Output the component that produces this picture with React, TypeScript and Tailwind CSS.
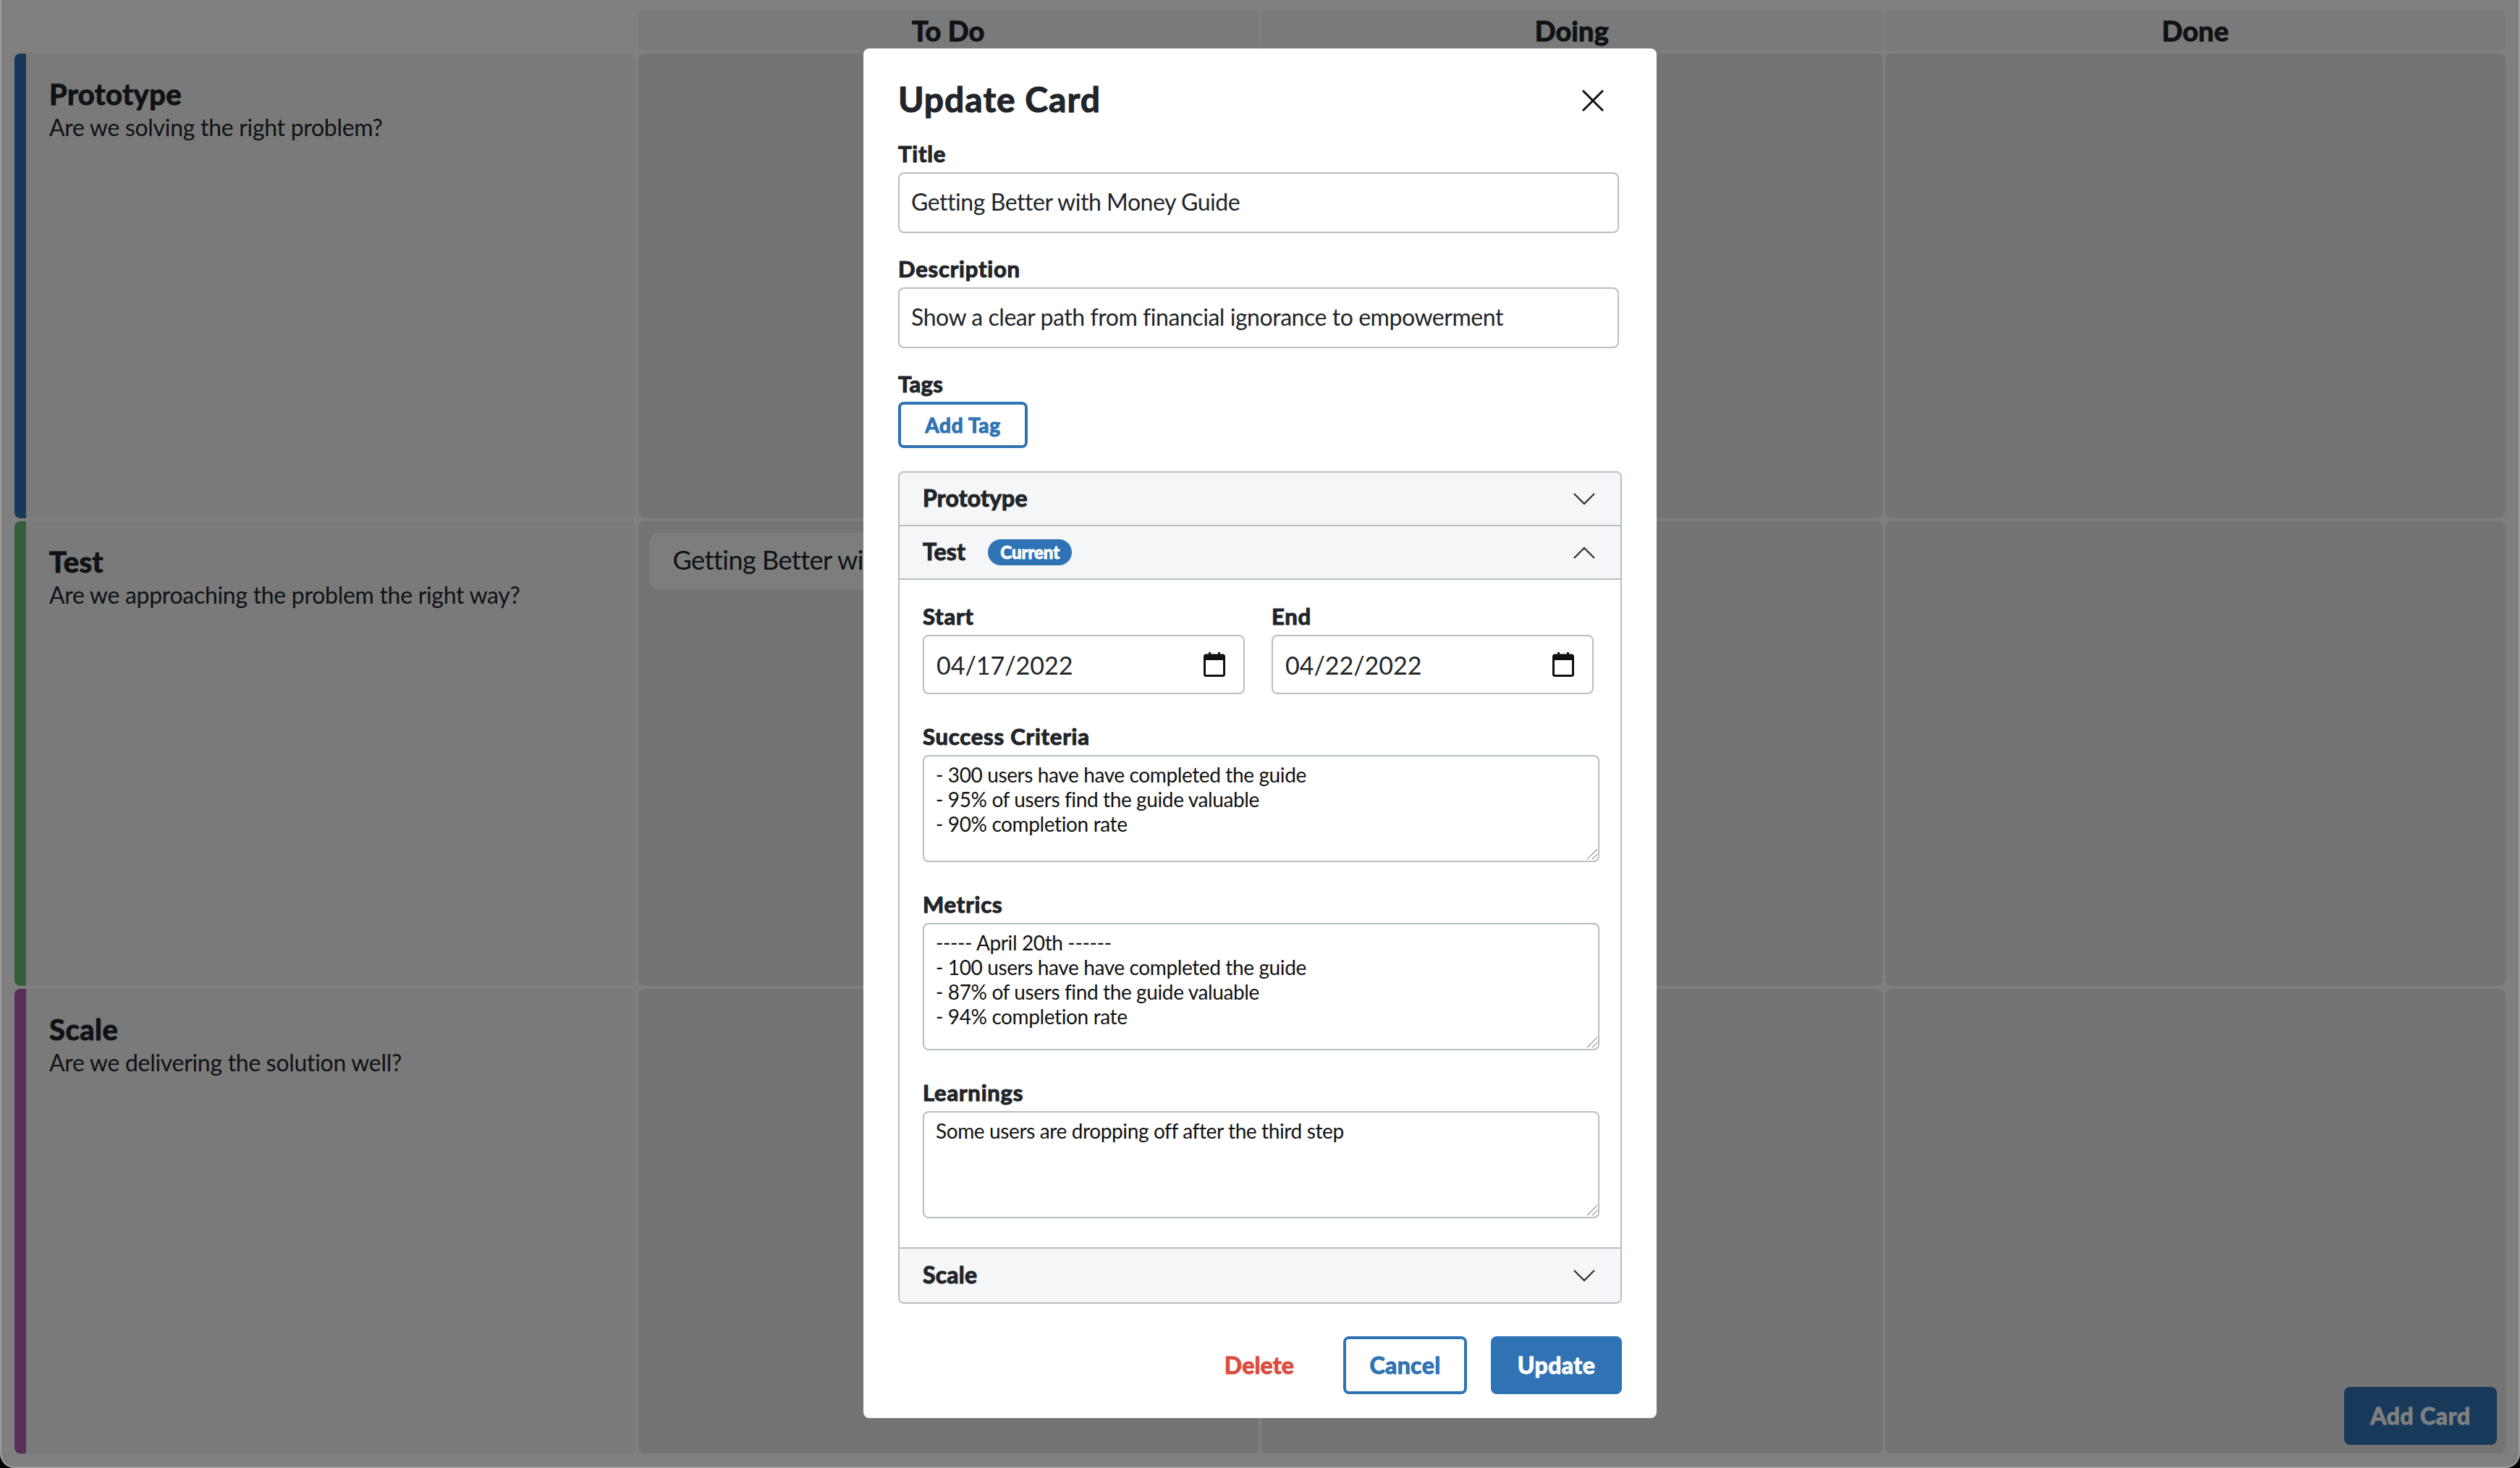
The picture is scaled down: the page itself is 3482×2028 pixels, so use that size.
import React from 'react';

const font = "font-['Lato',sans-serif]";
// Lato Bold is lighter than the reference's heading face, so it gets a thin stroke
const heavy = 'font-bold [-webkit-text-stroke:1.1px_currentColor]';

const rows = [
  { title: 'Prototype', question: 'Are we solving the right problem?', stripe: 'bg-[#2c72b2]' },
  { title: 'Test', question: 'Are we approaching the problem the right way?', stripe: 'bg-[#66c074]' },
  { title: 'Scale', question: 'Are we delivering the solution well?', stripe: 'bg-[#b45cae]' },
];

const Chevron: React.FC<{ up?: boolean }> = ({ up }) => (
  <svg width="30" height="17" viewBox="0 0 30 17" fill="none" stroke="#212529" strokeWidth="2">
    <path d={up ? 'M1 16 15 2l14 14' : 'M1 1l14 14L29 1'} />
  </svg>
);

const CalendarIcon: React.FC = () => (
  <svg width="30" height="34" viewBox="0 0 30 34" fill="none" className="shrink-0">
    <path d="M7 0h3v4H7zM20 0h3v4h-3z" fill="#111" />
    <rect x="1.5" y="4" width="27" height="28.5" rx="2" stroke="#111" strokeWidth="3" />
    <rect x="1" y="4" width="28" height="7" fill="#111" />
  </svg>
);

const Label: React.FC<{ text: string }> = ({ text }) => (
  <label className={`block text-[31px] leading-[32px] ${heavy} tracking-[0.8px] text-[#212529] mb-[10px]`}>{text}</label>
);

const Field: React.FC<{ label: string; value: string }> = ({ label, value }) => (
  <div className="mb-[33px]">
    <Label text={label} />
    <input
      readOnly
      value={value}
      className="block w-[996px] h-[84px] border-2 border-[#b8bec3] rounded-lg px-[16px] pb-1 text-[32px] tracking-[-0.45px] text-[#212529] outline-none"
    />
  </div>
);

const DateField: React.FC<{ label: string; value: string }> = ({ label, value }) => (
  <div className="w-[445px]">
    <Label text={label} />
    <div className="h-[82px] border-2 border-[#b8bec3] rounded-lg pl-[17px] pr-[25px] flex items-center justify-between">
      <input readOnly value={value} className="w-[300px] text-[34px] text-[#212529] outline-none" />
      <CalendarIcon />
    </div>
  </div>
);

const Area: React.FC<{ label: string; value: string; height: string }> = ({ label, value, height }) => (
  <div className="mb-[42px]">
    <Label text={label} />
    <div className="relative w-[935px]">
      <textarea
        readOnly
        defaultValue={value}
        className={`block w-full ${height} resize-none border-2 border-[#b8bec3] rounded-lg px-4 pt-2 text-[28px] leading-[34px] tracking-[-0.38px] text-[#111] outline-none`}
      />
      <svg width="15" height="15" viewBox="0 0 15 15" stroke="#555" strokeWidth="1" className="absolute right-[3px] bottom-1">
        <path d="M1 15 15 1M8 15l7-7" />
      </svg>
    </div>
  </div>
);

const AccordionHeader: React.FC<{ title: string; open?: boolean; current?: boolean; last?: boolean }> = ({ title, open, current, last }) => (
  <div className={`h-[74px] bg-[#f5f6f8] pl-8 pr-[35px] flex items-center justify-between ${last ? '' : 'border-b-2 border-[#b8bec3]'}`}>
    <div className="flex items-center gap-[31px]">
      <span className={`text-[32px] ${heavy} tracking-[0.2px] pb-[2px] text-[#212529]`}>{title}</span>
      {current && (
        <span className={`h-[36px] w-[116px] rounded-full bg-[#2f73b5] text-white text-[24px] ${heavy} tracking-[0px] flex items-center justify-center`}>Current</span>
      )}
    </div>
    <Chevron up={open} />
  </div>
);

const UpdateCardModal: React.FC = () => (
  <div className="w-[1096px] h-[1892px] bg-white rounded-lg pl-[48px] pt-12 pb-8 flex flex-col">
    <div className="h-[48px] w-[1000px] mb-[33px] flex items-center justify-between">
      <h2 className={`text-[48px] ${heavy} tracking-[1px] pb-1 text-[#212529]`}>Update Card</h2>
      <svg width="32" height="32" viewBox="0 0 32 32" stroke="#111" strokeWidth="3" className="mr-[24px]">
        <path d="M2 2l28 28M30 2 2 30" />
      </svg>
    </div>

    <Field label="Title" value="Getting Better with Money Guide" />
    <Field label="Description" value="Show a clear path from financial ignorance to empowerment" />

    <div className={`text-[31px] leading-[32px] ${heavy} tracking-[0.3px] text-[#212529] mb-[9px]`}>Tags</div>
    <button className={`w-[179px] h-[64px] border-4 border-[#2f73b5] rounded-lg text-[28px] ${heavy} tracking-[0.7px] text-[#2f73b5] mb-[32px]`}>Add Tag</button>

    <div className="w-[1000px] border-2 border-[#b8bec3] rounded-lg overflow-hidden">
      <AccordionHeader title="Prototype" />
      <AccordionHeader title="Test" open current />
      <div className="pl-8 pt-[34px] border-b-2 border-[#b8bec3] h-[924px]">
        <div className="flex gap-[37px] mb-[42px]">
          <DateField label="Start" value="04/17/2022" />
          <DateField label="End" value="04/22/2022" />
        </div>
        <Area label="Success Criteria" height="h-[148px]" value={'- 300 users have have completed the guide\n- 95% of users find the guide valuable\n- 90% completion rate'} />
        <Area label="Metrics" height="h-[176px]" value={'----- April 20th ------\n- 100 users have have completed the guide\n- 87% of users find the guide valuable\n- 94% completion rate'} />
        <Area label="Learnings" height="h-[148px]" value="Some users are dropping off after the third step" />
      </div>
      <AccordionHeader title="Scale" last />
    </div>

    <div className="mt-[45px] w-[1000px] flex items-center justify-end gap-[33px]">
      <button className={`text-[32px] ${heavy} tracking-[0.2px] text-[#dc4c3e] mr-[35px]`}>Delete</button>
      <button className={`w-[171px] h-[80px] border-4 border-[#2f73b5] rounded-lg text-[32px] ${heavy} tracking-[0.4px] text-[#2f73b5]`}>Cancel</button>
      <button className={`w-[181px] h-[80px] bg-[#2f73b5] rounded-lg text-[32px] ${heavy} tracking-[0.5px] text-white`}>Update</button>
    </div>
  </div>
);

const App: React.FC = () => {
  return (
    <div className={`${font} h-screen bg-black overflow-hidden`}>
      <div className="h-full bg-[#9c9c9c] pl-[2px] pr-[2px] pb-[2px] rounded-b-[20px]">
        <div className="relative h-full bg-white rounded-b-[18px] overflow-hidden">
          <div className="h-full pl-[18px] pr-[18px] pt-[15px] grid grid-cols-4 gap-x-[4px] gap-y-[4px] grid-rows-[55px_642px_642px_642px]">
            <div />
            {['To Do', 'Doing', 'Done'].map((name) => (
              <div key={name} className={`bg-[#f3f4f5] rounded-lg flex items-center justify-center text-[38px] ${heavy} tracking-[0.1px] text-[#212529]`}>{name}</div>
            ))}
            {rows.map((row) => (
              <React.Fragment key={row.title}>
                <div className="bg-[#f4f5f6] rounded-lg overflow-hidden flex">
                  <div className={`w-4 ${row.stripe}`} />
                  <div className="pl-[32px] pt-[29px]">
                    <div className={`text-[40px] leading-[54px] ${heavy} tracking-[0.5px] text-[#212529]`}>{row.title}</div>
                    <div className="text-[32px] leading-[37px] tracking-[-0.3px] text-[#212529]">{row.question}</div>
                  </div>
                </div>
                {[0, 1, 2].map((col) => (
                  <div key={col} className="relative bg-[#e8e9e8] rounded-lg p-4">
                    {row.title === 'Test' && col === 0 && (
                      <div className="h-[78px] bg-[#f9fafb] rounded-xl pl-8 pb-1 flex items-center text-[36px] tracking-[-0.5px] text-[#212529]">Getting Better with Money Guide</div>
                    )}
                    {row.title === 'Scale' && col === 2 && (
                      <button className={`absolute right-3 bottom-3 w-[211px] h-[80px] bg-[#2f73b5] rounded-lg text-[32px] ${heavy} tracking-[0.7px] text-white`}>Add Card</button>
                    )}
                  </div>
                ))}
              </React.Fragment>
            ))}
          </div>
          <div className="absolute inset-0 bg-black/50 flex items-center justify-center">
            <UpdateCardModal />
          </div>
        </div>
      </div>
    </div>
  );
};

export default App;
